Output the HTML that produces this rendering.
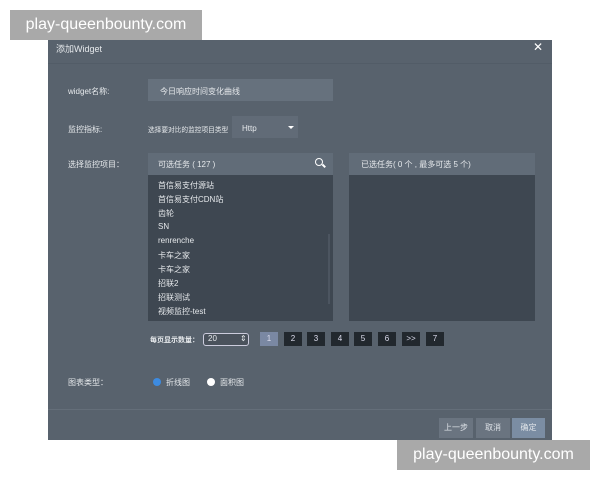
<!DOCTYPE html>
<html><head><meta charset="utf-8"><style>
body{margin:0;width:600px;height:480px;background:#fff;position:relative;overflow:hidden;font-family:"Liberation Sans","Noto Sans CJK SC",sans-serif;color:#e6e9ec}
.a{position:absolute}
.dlg{left:48px;top:40px;width:504px;height:400px;background:#58626d}
.t{font-size:8px;white-space:nowrap}
.pg{position:absolute;top:332px;width:18px;height:14px;background:#22282e;color:#dde;font-size:8px;text-align:center;line-height:14px}
.li{left:158px;font-size:8px}
.btn{top:418px;height:20px;background:#6a7480;font-size:8px;text-align:center;line-height:20px;color:#dfe3e8}
</style></head><body>
<div class="a" style="left:10px;top:10px;width:192px;height:30px;background:#a9a9a9;color:#fff;font-size:16px;line-height:30px;text-align:center">play-queenbounty.com</div>
<div class="a dlg"></div>
<div class="a t" style="left:56px;top:42px;font-size:9px">添加Widget</div>
<div class="a" style="left:533px;top:40px;font-size:12px;color:#fff">✕</div>
<div class="a" style="left:48px;top:63px;width:504px;height:1px;background:#525c67"></div>
<div class="a t" style="left:68px;top:86px">widget名称:</div>
<div class="a" style="left:148px;top:79px;width:185px;height:22px;background:#66717d"></div>
<div class="a t" style="left:160px;top:86px">今日响应时间变化曲线</div>
<div class="a t" style="left:68px;top:124px">监控指标:</div>
<div class="a t" style="left:148px;top:124px;font-size:6.7px">选择要对比的监控项目类型</div>
<div class="a" style="left:232px;top:116px;width:66px;height:22px;background:#616b77"></div>
<div class="a t" style="left:242px;top:124px">Http</div>
<div class="a" style="left:288px;top:126px;border:3px solid transparent;border-top:3px solid #fff"></div>
<div class="a t" style="left:68px;top:159px">选择监控项目：</div>
<div class="a" style="left:148px;top:153px;width:185px;height:22px;background:#616c78"></div>
<div class="a t" style="left:158px;top:159px">可选任务 ( 127 )</div>
<div class="a" style="left:315px;top:158px;width:6px;height:6px;border:1.5px solid #fff;border-radius:50%"></div>
<div class="a" style="left:322px;top:165px;width:4px;height:1.5px;background:#fff;transform:rotate(45deg)"></div>
<div class="a" style="left:148px;top:175px;width:185px;height:146px;background:#3e4751"></div>
<div class="a" style="left:328px;top:234px;width:2px;height:70px;background:#4c5560"></div>
<div class="a li" style="top:180px">首信易支付源站</div>
<div class="a li" style="top:194px">首信易支付CDN站</div>
<div class="a li" style="top:208px">齿轮</div>
<div class="a li" style="top:222px">SN</div>
<div class="a li" style="top:236px">renrenche</div>
<div class="a li" style="top:250px">卡车之家</div>
<div class="a li" style="top:264px">卡车之家</div>
<div class="a li" style="top:278px">招联2</div>
<div class="a li" style="top:292px">招联测试</div>
<div class="a li" style="top:306px">视频监控-test</div>
<div class="a" style="left:349px;top:153px;width:186px;height:22px;background:#616c78"></div>
<div class="a t" style="left:361px;top:159px">已选任务( 0 个 , 最多可选 5 个)</div>
<div class="a" style="left:349px;top:175px;width:186px;height:146px;background:#3e4751"></div>
<div class="a t" style="left:150px;top:335px;font-weight:bold;font-size:7px">每页显示数量：</div>
<div class="a" style="left:203px;top:333px;width:44px;height:11px;border:1px solid #ccd;border-radius:3px;background:#4a525c"></div>
<div class="a t" style="left:208px;top:334px">20</div>
<div class="a t" style="left:240px;top:334px">⇕</div>
<div class="pg" style="left:260px;background:#7a88a3">1</div>
<div class="pg" style="left:284px">2</div>
<div class="pg" style="left:307px">3</div>
<div class="pg" style="left:331px">4</div>
<div class="pg" style="left:354px">5</div>
<div class="pg" style="left:378px">6</div>
<div class="pg" style="left:402px">&gt;&gt;</div>
<div class="pg" style="left:426px">7</div>
<div class="a t" style="left:68px;top:377px">图表类型：</div>
<div class="a" style="left:153px;top:378px;width:8px;height:8px;border-radius:50%;background:#3d8be0;border:0"></div>
<div class="a t" style="left:166px;top:377px">折线图</div>
<div class="a" style="left:207px;top:378px;width:8px;height:8px;border-radius:50%;background:#fff"></div>
<div class="a t" style="left:220px;top:377px">面积图</div>
<div class="a" style="left:48px;top:409px;width:504px;height:1px;background:#646e79"></div>
<div class="a btn" style="left:439px;width:34px">上一步</div>
<div class="a btn" style="left:476px;width:34px">取消</div>
<div class="a btn" style="left:512px;width:33px;background:#7b8da3">确定</div>
<div class="a" style="left:397px;top:440px;width:193px;height:30px;background:#a9a9a9;color:#fff;font-size:16px;line-height:30px;text-align:center">play-queenbounty.com</div>
</body></html>
